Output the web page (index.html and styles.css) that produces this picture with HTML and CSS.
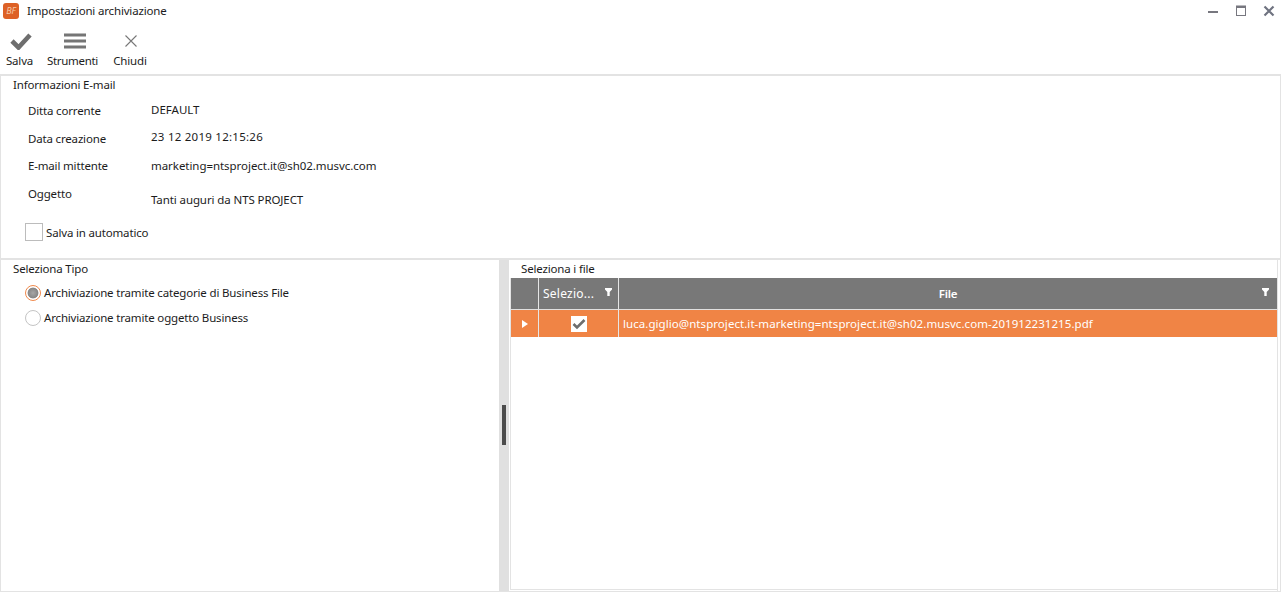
FILE: index.html
```html
<!DOCTYPE html>
<html lang="it">
<head>
<meta charset="utf-8">
<title>Impostazioni archiviazione</title>
<link rel="stylesheet" href="styles.css">
</head>
<body>
<div class="window">
  <header class="titlebar">
    <span class="logo"><span class="logo-text">BF</span></span>
    <span class="title">Impostazioni archiviazione</span>
    <div class="winbtns">
      <svg width="12" height="12" viewBox="0 0 12 12"><rect x="1" y="6" width="10" height="2" fill="#77777f"/></svg>
      <svg width="12" height="12" viewBox="0 0 12 12"><rect x="1.5" y="1.5" width="9" height="9" fill="#fff" stroke="#77777f"/><rect x="1" y="0.500" width="10" height="2.500" fill="#77777f"/></svg>
      <svg width="12" height="12" viewBox="0 0 12 12"><path d="M1.500 1.500l9 9M10.500 1.500l-9 9" stroke="#6f7380" stroke-width="2.200" fill="none"/></svg>
    </div>
  </header>
  <nav class="toolbar">
    <div class="tool tool-save">
      <svg class="icon-save" width="22" height="18" viewBox="0 0 22 18"><path d="M2 9l6.500 6.500L20 3" fill="none" stroke="#6e6e6e" stroke-width="4.600"/></svg>
      <span>Salva</span>
    </div>
    <div class="tool tool-tools">
      <svg class="icon-tools" width="22" height="18" viewBox="0 0 22 18"><path d="M0 3h22M0 9h22M0 15h22" stroke="#757575" stroke-width="3"/></svg>
      <span>Strumenti</span>
    </div>
    <div class="tool tool-close">
      <svg class="icon-close" width="22" height="18" viewBox="0 0 22 18"><path d="M5.500 3.500l11 11M16.500 3.500l-11 11" stroke="#777" stroke-width="1.100"/></svg>
      <span>Chiudi</span>
    </div>
  </nav>
  <section class="info">
    <h2 class="group-title">Informazioni E-mail</h2>
    <div class="row row-1"><span class="label">Ditta corrente</span><span class="value">DEFAULT</span></div>
    <div class="row row-2"><span class="label">Data creazione</span><span class="value">23 12 2019 12:15:26</span></div>
    <div class="row row-3"><span class="label">E-mail mittente</span><span class="value">marketing=ntsproject.it@sh02.musvc.com</span></div>
    <div class="row row-4"><span class="label">Oggetto</span><span class="value">Tanti auguri da NTS PROJECT</span></div>
    <label class="auto"><span class="checkbox"></span>Salva in automatico</label>
  </section>
  <main class="split">
    <section class="left">
      <h2 class="group-title">Seleziona Tipo</h2>
      <div class="radio-row radio-first"><span class="radio radio-on"></span>Archiviazione tramite categorie di Business File</div>
      <div class="radio-row"><span class="radio"></span>Archiviazione tramite oggetto Business</div>
    </section>
    <div class="splitter"><span class="grip"></span></div>
    <section class="right">
      <h2 class="group-title">Seleziona i file</h2>
      <div class="grid">
        <div class="grid-head">
          <div class="cell c-ind"></div>
          <div class="cell c-sel"><span>Selezio...</span><svg class="funnel" width="7" height="8" viewBox="0 0 7 8"><path d="M0 0h7v1.500L4.700 4v4H2.300V4L0 1.500z" fill="#fff"/></svg></div>
          <div class="cell c-file"><span>File</span><svg class="funnel" width="7" height="8" viewBox="0 0 7 8"><path d="M0 0h7v1.500L4.700 4v4H2.300V4L0 1.500z" fill="#fff"/></svg></div>
        </div>
        <div class="grid-row">
          <div class="cell c-ind"><svg width="6" height="8" viewBox="0 0 6 8"><path d="M0 0l6 4-6 4z" fill="#fff"/></svg></div>
          <div class="cell c-sel"><span class="cellcheck"><svg width="16" height="16" viewBox="0 0 16 16"><path d="M2.500 8l3.500 3.500L13.500 4" fill="none" stroke="#6e6e6e" stroke-width="2.600"/></svg></span></div>
          <div class="cell c-file">luca.giglio@ntsproject.it-marketing=ntsproject.it@sh02.musvc.com-201912231215.pdf</div>
        </div>
      </div>
    </section>
  </main>
</div>
</body>
</html>
```
FILE: styles.css
```css
* { box-sizing: border-box; }
html, body { margin: 0; padding: 0; height: 100%; overflow: hidden; background: #fff; }
body { font-family: "Noto Sans", "Open Sans", sans-serif; font-size: 11.5px; color: #1c1c1c; letter-spacing: -0.17px; }
.window { height: 592px; display: flex; flex-direction: column; }
.titlebar { height: 23px; display: flex; align-items: center; padding: 0 0 2px 3px; flex: none; }
.logo { width: 16px; height: 16px; border-radius: 3px; background: #dd6126; display: flex; align-items: center; justify-content: center; }
.logo-text { color: #f6c8a8; font-size: 9px; font-style: italic; line-height: 1; }
.title { margin-left: 8px; }
.winbtns { margin-left: auto; display: flex; gap: 16px; padding-right: 6px; }
.toolbar { height: 51px; display: flex; flex: none; padding-top: 9px; }
.tool { display: flex; flex-direction: column; align-items: center; gap: 3px; line-height: 16px; }
.tool-save { width: 39px; }
.tool-tools { width: 67px; letter-spacing: -0.3px; }
.tool-close { width: 48px; }
.icon-save { margin-left: 2px; }
.icon-tools { margin-left: 4px; }
.icon-close { margin-left: 2px; }
.info { height: 184px; flex: none; border-top: 2px solid #e3e3e3; border-left: 1px solid #e3e3e3; border-right: 1px solid #e3e3e3; padding-left: 12px; }
.group-title { margin: 0; font-size: 11.5px; font-weight: 400; line-height: 16px; }
.info .group-title { margin-top: 1px; }
.row { display: flex; padding-left: 15px; }
.label { width: 123px; }
.value { letter-spacing: -0.05px; }
.row-1 { height: 28px; margin-top: 3px; align-items: center; }
.row-1 .value { margin-top: -2px; letter-spacing: 0; }
.row-2 { height: 28px; align-items: center; }
.row-2 .value { margin-top: -4px; letter-spacing: 0.25px; }
.row-3 { height: 27px; align-items: center; }
.row-4 { height: 44px; padding-top: 7px; }
.row-4 .value { margin-top: 6px; letter-spacing: -0.1px; }
.auto { display: flex; align-items: center; gap: 3px; padding-left: 12px; }
.checkbox { width: 18px; height: 18px; border: 1px solid #bcbcbc; background: #fff; }
.split { flex: 1; display: flex; min-height: 0; border-top: 2px solid #e3e3e3; border-bottom: 1px solid #e3e3e3; border-right: 1px solid #e3e3e3; }
.left { width: 499px; flex: none; border-left: 1px solid #e3e3e3; padding-left: 12px; }
.splitter { width: 10px; flex: none; background: #e0e0e0; display: flex; align-items: center; justify-content: center; padding-bottom: 1px; }
.grip { width: 4px; height: 40px; background: #4c4c4c; }
.right { flex: 1; min-width: 0; margin-right: 2px; padding-left: 1px; border-right: 1px solid #e3e3e3; display: flex; flex-direction: column; padding-bottom: 1px; }
.right .group-title { padding-left: 11px; height: 18px; line-height: 18px; }
.left .group-title { line-height: 18px; }
.radio-row { display: flex; align-items: center; gap: 3px; height: 25px; padding-left: 12px; }
.radio-first { margin-top: 2px; }
.radio { width: 16px; height: 16px; border-radius: 50%; border: 1px solid #c4c4c4; background: #fff; flex: none; }
.radio-on { border-color: #f0894c; background: radial-gradient(circle, #a6a6a6 0, #868686 5px, #fff 5.800px); }
.grid { flex: 1; border-bottom: 1px solid #e3e3e3; border-left: 1px solid #e3e3e3; }
.grid-head { display: flex; height: 32px; background: #787878; border-bottom: 1px solid #e0e0e0; color: #fff; }
.grid-row { display: flex; height: 27px; background: #f08445; color: #fff; letter-spacing: 0.06px; }
.cell { display: flex; align-items: center; position: relative; border-right: 1px solid #e6e6e6; }
.c-ind { width: 28px; flex: none; justify-content: center; }
.c-sel { width: 80px; flex: none; padding-left: 4px; }
.grid-head .c-sel { font-size: 12px; letter-spacing: 0.25px; }
.c-file { flex: 1; min-width: 0; padding-left: 4px; border-right: 0; }
.grid-head .c-file { justify-content: center; font-weight: 600; padding: 0; }
.grid-row .c-sel { justify-content: center; padding-left: 0; }
.funnel { position: absolute; right: 6px; top: 10px; }
.grid-head .c-file .funnel { right: 8px; }
.cellcheck { width: 16px; height: 16px; background: #fff; display: block; }
.cellcheck svg { display: block; }
```
